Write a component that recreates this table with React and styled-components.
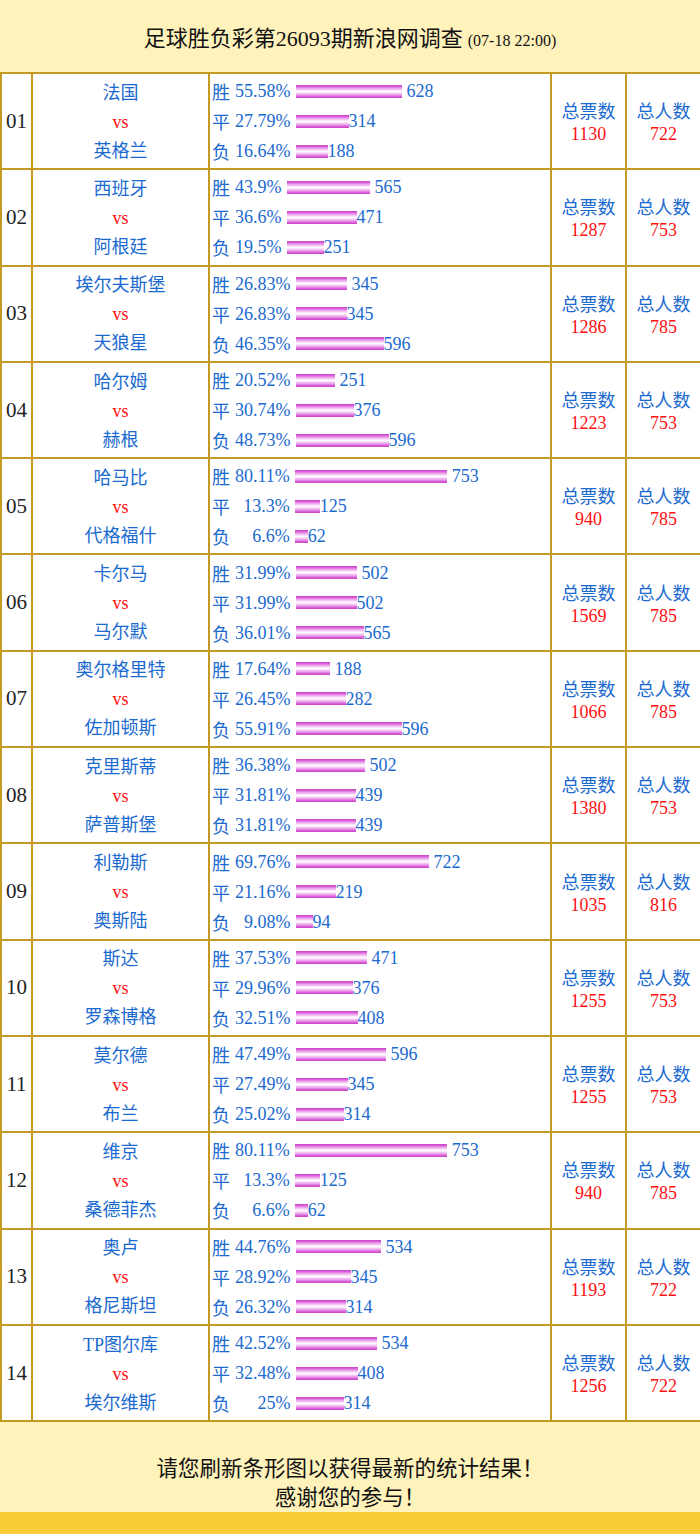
import React from "react";
import styled, { createGlobalStyle } from "styled-components";

const GlobalStyle = createGlobalStyle`
  body {
    margin: 0;
    background: #ffffff;
    font-family: "Liberation Serif", "Noto Sans CJK SC", serif;
  }
`;

const Page = styled.div`
  width: 700px;
  display: flex;
  flex-direction: column;
`;

const Header = styled.div`
  height: 72px;
  background: #fff2bb;
  display: flex;
  align-items: center;
  justify-content: center;
  color: #111;
`;

const Title = styled.h1`
  margin: 0;
  font-size: 22px;
  font-weight: normal;
  font-family: "Liberation Serif", "Noto Sans CJK SC", serif;
`;

const Stamp = styled.span`
  font-size: 16px;
  margin-left: 5px;
`;

const Table = styled.table`
  width: 700px;
  border-collapse: collapse;
  table-layout: fixed;
  border: 2px solid #c49a22;
`;

const Cell = styled.td`
  border: 2px solid #c49a22;
  height: 94.3px;
  padding: 0;
  text-align: center;
  vertical-align: middle;
`;

const NumCell = styled(Cell)`
  font-size: 21px;
  color: #222;
`;

const Teams = styled.div`
  display: flex;
  flex-direction: column;
  padding-top: 2px;
  line-height: 29px;
  font-size: 18px;
  color: #1a6ad0;
`;

const Vs = styled.span`
  color: #ff1010;
`;

const BarCell = styled(Cell)`
  text-align: left;
  padding-left: 2px;
`;

const BarGrid = styled.div`
  display: grid;
  grid-template-columns: auto auto 1fr;
  column-gap: 5px;
  line-height: 30px;
  font-size: 18px;
  color: #1a6ad0;
`;

const Label = styled.span`
  font-family: "Noto Sans CJK SC", sans-serif;
`;

const Pct = styled.span`
  text-align: right;
`;

const BarLine = styled.div`
  display: flex;
  align-items: center;
`;

const Bar = styled.span`
  display: inline-block;
  height: 13px;
  background: linear-gradient(
    #c63ec6 0%,
    #d862d8 12%,
    #eeaaee 28%,
    #fde9fd 44%,
    #ffffff 50%,
    #fde9fd 56%,
    #eeaaee 72%,
    #d862d8 88%,
    #c63ec6 100%
  );
`;

const Count = styled.span`
  margin-left: ${(p) => (p.$gap ? "5px" : "0")};
`;

const Total = styled.div`
  display: flex;
  flex-direction: column;
  padding-top: 4px;
  line-height: 22px;
  font-size: 18px;
  color: #1a6ad0;
`;

const TotalNum = styled.span`
  color: #ff1010;
`;

const Footer = styled.div`
  height: 90px;
  background: #fff2bb;
  display: flex;
  flex-direction: column;
  align-items: center;
  justify-content: center;
  padding-top: 27px;
  box-sizing: border-box;
  font-size: 21.5px;
  line-height: 29px;
  color: #111;
  font-family: "Noto Sans CJK SC", sans-serif;
`;

const BottomBar = styled.div`
  height: 23px;
  background: #f8cd38;
`;

const matches = [
  ["01", "法国", "英格兰", [["55.58", 628], ["27.79", 314], ["16.64", 188]], 1130, 722],
  ["02", "西班牙", "阿根廷", [["43.9", 565], ["36.6", 471], ["19.5", 251]], 1287, 753],
  ["03", "埃尔夫斯堡", "天狼星", [["26.83", 345], ["26.83", 345], ["46.35", 596]], 1286, 785],
  ["04", "哈尔姆", "赫根", [["20.52", 251], ["30.74", 376], ["48.73", 596]], 1223, 753],
  ["05", "哈马比", "代格福什", [["80.11", 753], ["13.3", 125], ["6.6", 62]], 940, 785],
  ["06", "卡尔马", "马尔默", [["31.99", 502], ["31.99", 502], ["36.01", 565]], 1569, 785],
  ["07", "奥尔格里特", "佐加顿斯", [["17.64", 188], ["26.45", 282], ["55.91", 596]], 1066, 785],
  ["08", "克里斯蒂", "萨普斯堡", [["36.38", 502], ["31.81", 439], ["31.81", 439]], 1380, 753],
  ["09", "利勒斯", "奥斯陆", [["69.76", 722], ["21.16", 219], ["9.08", 94]], 1035, 816],
  ["10", "斯达", "罗森博格", [["37.53", 471], ["29.96", 376], ["32.51", 408]], 1255, 753],
  ["11", "莫尔德", "布兰", [["47.49", 596], ["27.49", 345], ["25.02", 314]], 1255, 753],
  ["12", "维京", "桑德菲杰", [["80.11", 753], ["13.3", 125], ["6.6", 62]], 940, 785],
  ["13", "奥卢", "格尼斯坦", [["44.76", 534], ["28.92", 345], ["26.32", 314]], 1193, 722],
  ["14", "TP图尔库", "埃尔维斯", [["42.52", 534], ["32.48", 408], ["25", 314]], 1256, 722],
];

const labels = ["胜", "平", "负"];

export default function App() {
  return (
    <Page>
      <GlobalStyle />
      <Header>
        <Title>
          足球胜负彩第26093期新浪网调查<Stamp>(07-18 22:00)</Stamp>
        </Title>
      </Header>
      <Table>
        <colgroup>
          <col style={{ width: 31 }} />
          <col style={{ width: 177 }} />
          <col style={{ width: 342 }} />
          <col style={{ width: 75 }} />
          <col style={{ width: 75 }} />
        </colgroup>
        <tbody>
          {matches.map(([no, home, away, stats, votes, people]) => (
            <tr key={no}>
              <NumCell>{no}</NumCell>
              <Cell>
                <Teams>
                  <span>{home}</span>
                  <Vs>vs</Vs>
                  <span>{away}</span>
                </Teams>
              </Cell>
              <BarCell>
                <BarGrid>
                  {stats.map(([pct, count], i) => (
                    <React.Fragment key={i}>
                      <Label>{labels[i]}</Label>
                      <Pct>{pct}%</Pct>
                      <BarLine>
                        <Bar style={{ width: Math.round(parseFloat(pct) * 1.9) }} />
                        <Count $gap={i === 0}>{count}</Count>
                      </BarLine>
                    </React.Fragment>
                  ))}
                </BarGrid>
              </BarCell>
              <Cell>
                <Total>
                  <span>总票数</span>
                  <TotalNum>{votes}</TotalNum>
                </Total>
              </Cell>
              <Cell>
                <Total>
                  <span>总人数</span>
                  <TotalNum>{people}</TotalNum>
                </Total>
              </Cell>
            </tr>
          ))}
        </tbody>
      </Table>
      <Footer>
        <div>请您刷新条形图以获得最新的统计结果！</div>
        <div>感谢您的参与！</div>
      </Footer>
      <BottomBar />
    </Page>
  );
}
